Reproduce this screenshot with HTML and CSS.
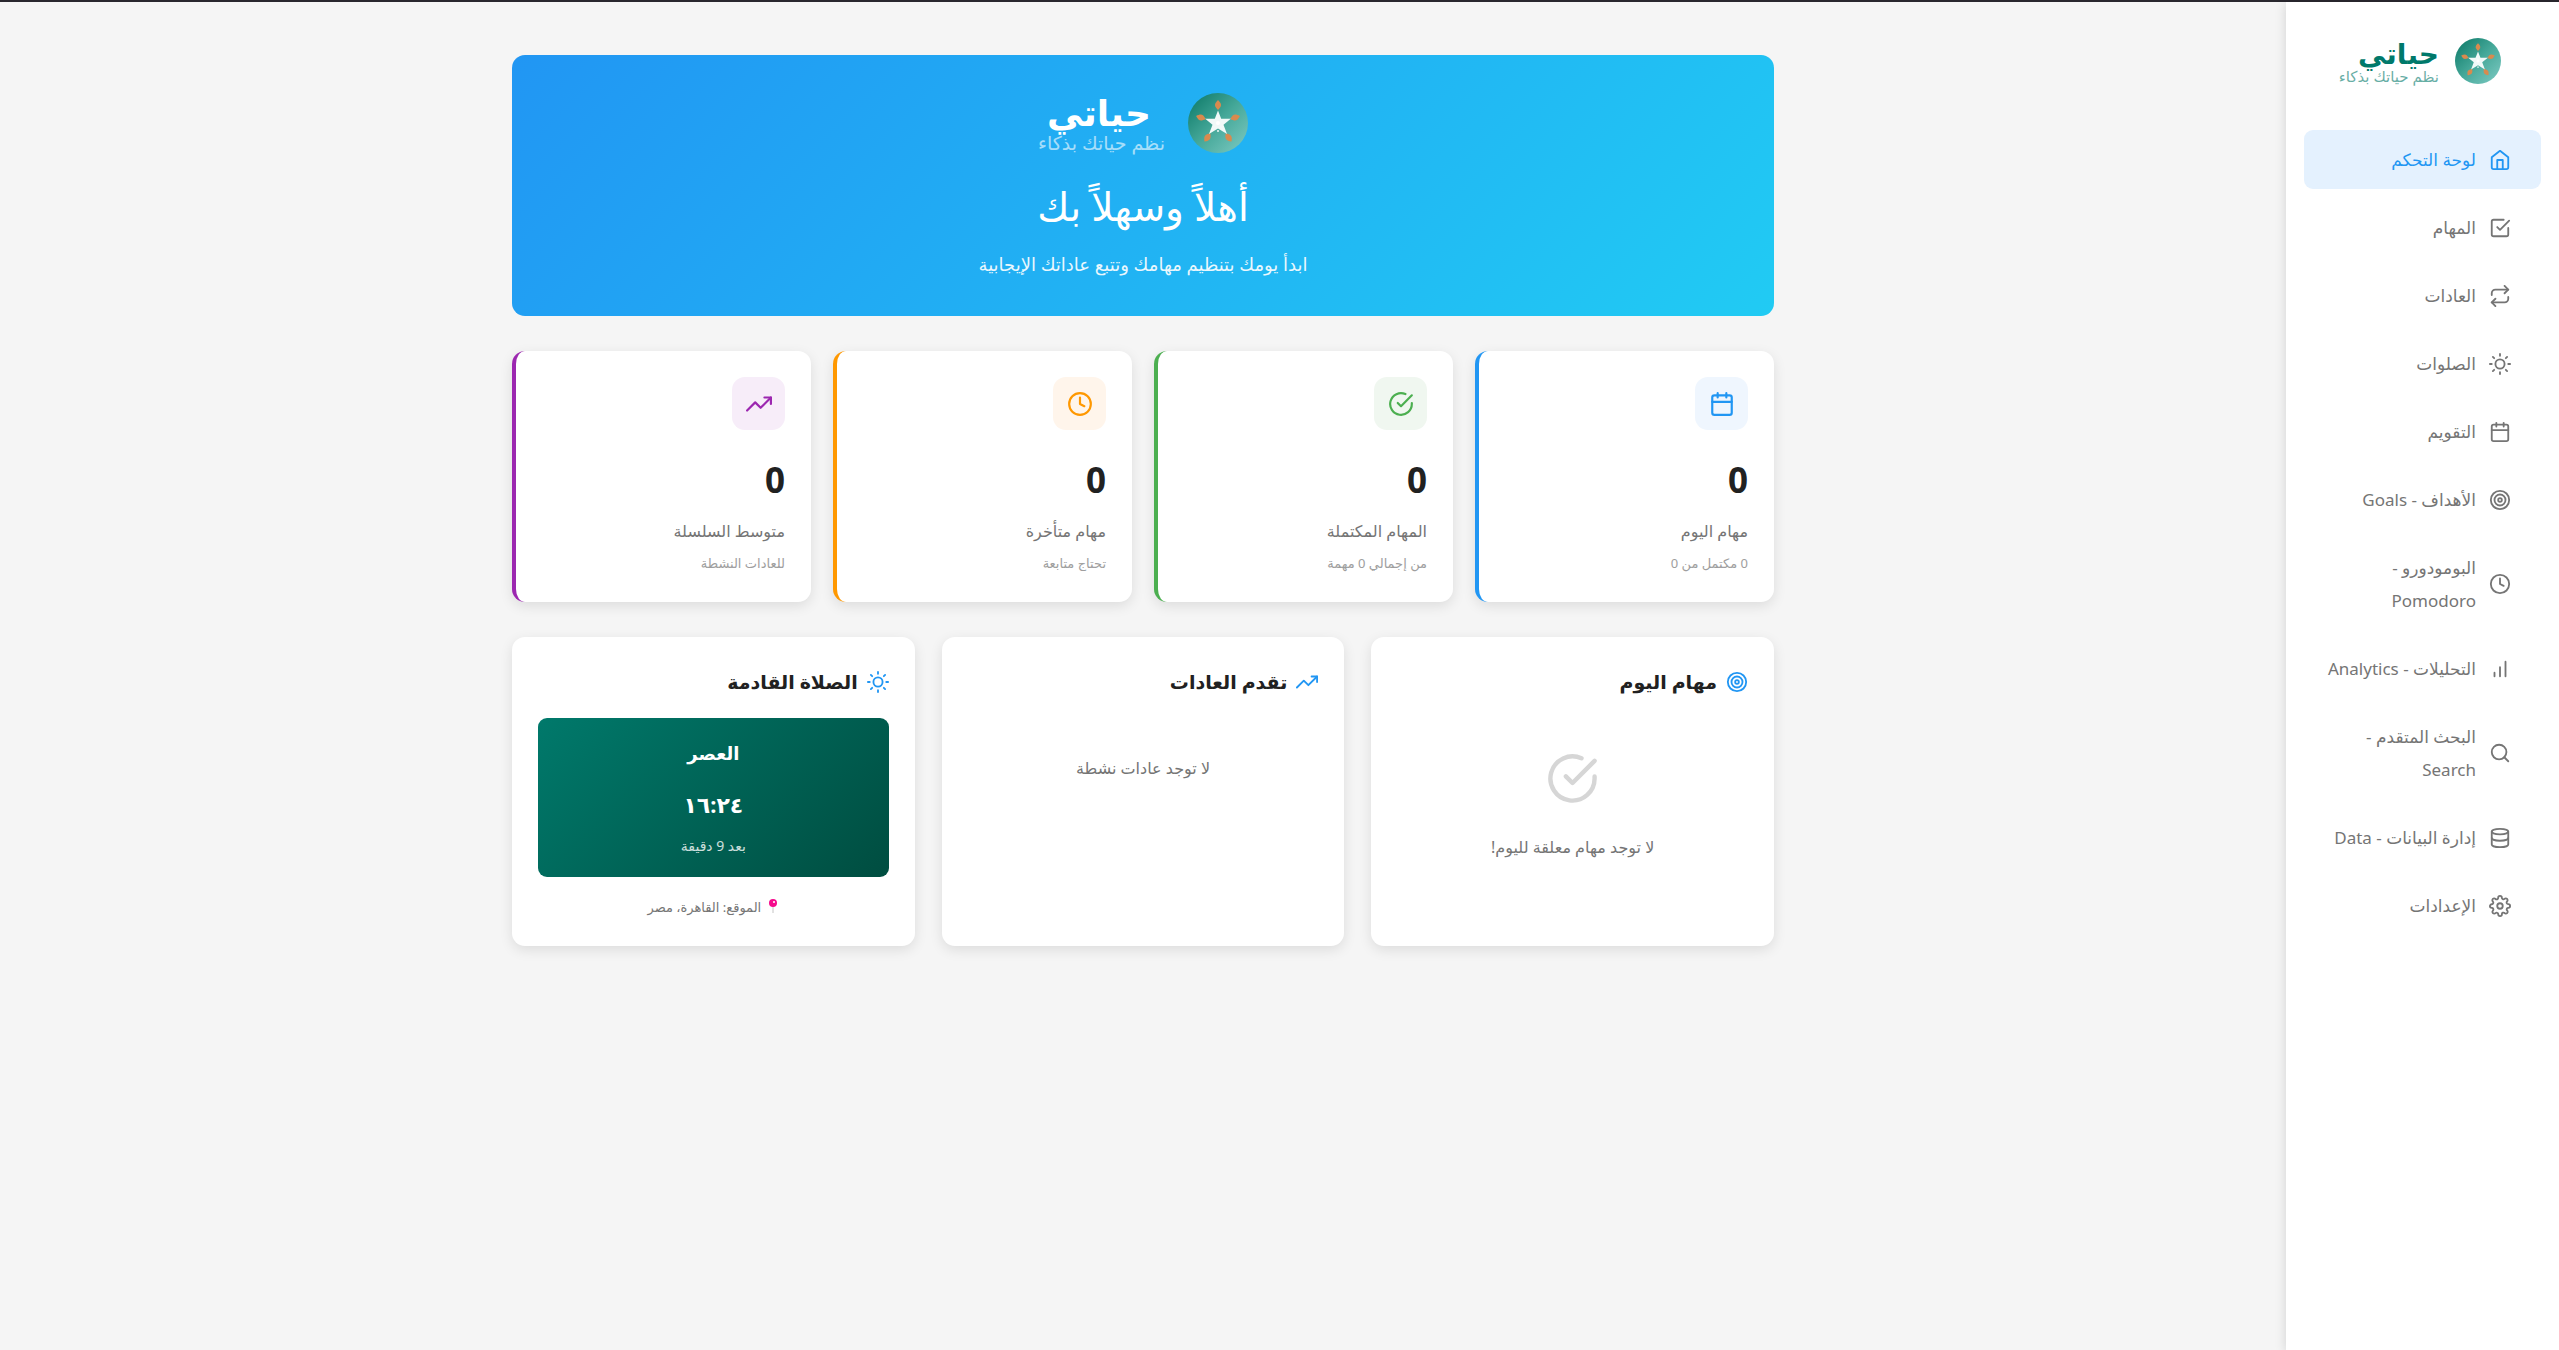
FILE: index.html
```html
<!DOCTYPE html>
<html lang="ar" dir="rtl">
<head>
<meta charset="utf-8">
<meta name="viewport" content="width=device-width, initial-scale=1">
<title>حياتي</title>
<link rel="stylesheet" href="styles.css">
</head>
<body>
<svg class="sprite" aria-hidden="true">
  <defs>
    <linearGradient id="mark-fill" x1="0" y1="0" x2="1" y2="1">
      <stop offset="0.100" stop-color="#15806f"/><stop offset="0.500" stop-color="#45a899"/><stop offset="1" stop-color="#80cbc4"/>
    </linearGradient>
    <symbol id="mark" viewBox="0 0 60 60">
      <circle cx="30" cy="30" r="30" fill="url(#mark-fill)"/>
      <g fill="#d98a4e">
        <path id="leaf" d="M30 7c4 4 4 6 0 10c-4-4-4-6 0-10z"/>
        <use href="#leaf" transform="rotate(72 30 30)"/>
        <use href="#leaf" transform="rotate(144 30 30)"/>
        <use href="#leaf" transform="rotate(216 30 30)"/>
        <use href="#leaf" transform="rotate(288 30 30)"/>
      </g>
      <path fill="#f1f9f8" d="M30 17.500l3.200 8.200h9.600l-7.300 6 3.500 9.300-9-5.500-9 5.500 3.500-9.300-7.300-6h9.600z"/>
      <circle cx="30" cy="30" r="2" fill="#fff"/><circle cx="30" cy="38" r="1" fill="#f1f9f8"/>
    </symbol>
    <symbol id="home" viewBox="0 0 24 24"><path d="M3 9l9-7 9 7v11a2 2 0 0 1-2 2H5a2 2 0 0 1-2-2z"/><path d="M9 22V12h6v10"/></symbol>
    <symbol id="check-square" viewBox="0 0 24 24"><path d="M9 11l3 3L22 4"/><path d="M21 12v7a2 2 0 0 1-2 2H5a2 2 0 0 1-2-2V5a2 2 0 0 1 2-2h11"/></symbol>
    <symbol id="repeat" viewBox="0 0 24 24"><path d="M17 1l4 4-4 4"/><path d="M3 11V9a4 4 0 0 1 4-4h14"/><path d="M7 23l-4-4 4-4"/><path d="M21 13v2a4 4 0 0 1-4 4H3"/></symbol>
    <symbol id="sun" viewBox="0 0 24 24"><circle cx="12" cy="12" r="5"/><path d="M12 1v2M12 21v2M4.220 4.220l1.420 1.420M18.360 18.360l1.420 1.420M1 12h2M21 12h2M4.220 19.780l1.420-1.420M18.360 5.640l1.420-1.420"/></symbol>
    <symbol id="calendar" viewBox="0 0 24 24"><rect x="3" y="4" width="18" height="18" rx="2"/><path d="M16 2v4M8 2v4M3 10h18"/></symbol>
    <symbol id="target" viewBox="0 0 24 24"><circle cx="12" cy="12" r="10"/><circle cx="12" cy="12" r="6"/><circle cx="12" cy="12" r="2"/></symbol>
    <symbol id="clock" viewBox="0 0 24 24"><circle cx="12" cy="12" r="10"/><path d="M12 6v6l4 2"/></symbol>
    <symbol id="bars" viewBox="0 0 24 24"><path d="M18 20V4M12 20V10M6 20v-4"/></symbol>
    <symbol id="search" viewBox="0 0 24 24"><circle cx="11" cy="11" r="8"/><path d="M21 21l-4.350-4.350"/></symbol>
    <symbol id="database" viewBox="0 0 24 24"><ellipse cx="12" cy="5" rx="9" ry="3"/><path d="M21 12c0 1.660-4 3-9 3s-9-1.340-9-3"/><path d="M3 5v14c0 1.660 4 3 9 3s9-1.340 9-3V5"/></symbol>
    <symbol id="settings" viewBox="0 0 24 24"><circle cx="12" cy="12" r="3"/><path d="M19.400 15a1.650 1.650 0 0 0 .33 1.820l.06.06a2 2 0 0 1 0 2.830 2 2 0 0 1-2.830 0l-.06-.06a1.650 1.650 0 0 0-1.820-.33 1.650 1.650 0 0 0-1 1.510V21a2 2 0 0 1-2 2 2 2 0 0 1-2-2v-.09A1.650 1.650 0 0 0 9 19.400a1.650 1.650 0 0 0-1.820.33l-.06.06a2 2 0 0 1-2.830 0 2 2 0 0 1 0-2.830l.06-.06a1.650 1.650 0 0 0 .33-1.820 1.650 1.650 0 0 0-1.510-1H3a2 2 0 0 1-2-2 2 2 0 0 1 2-2h.09A1.650 1.650 0 0 0 4.600 9a1.650 1.650 0 0 0-.33-1.820l-.06-.06a2 2 0 0 1 0-2.830 2 2 0 0 1 2.830 0l.06.06a1.650 1.650 0 0 0 1.820.33H9a1.650 1.650 0 0 0 1-1.510V3a2 2 0 0 1 2-2 2 2 0 0 1 2 2v.09a1.650 1.650 0 0 0 1 1.510 1.650 1.650 0 0 0 1.820-.33l.06-.06a2 2 0 0 1 2.830 0 2 2 0 0 1 0 2.830l-.06.06a1.650 1.650 0 0 0-.33 1.820V9a1.650 1.650 0 0 0 1.510 1H21a2 2 0 0 1 2 2 2 2 0 0 1-2 2h-.09a1.650 1.650 0 0 0-1.510 1z"/></symbol>
    <symbol id="check-circle" viewBox="0 0 24 24"><path d="M22 11.080V12a10 10 0 1 1-5.930-9.140"/><path d="M22 4L12 14.010l-3-3"/></symbol>
    <symbol id="trend" viewBox="0 0 24 24"><path d="M23 6l-9.500 9.500-5-5L1 18"/><path d="M17 6h6v6"/></symbol>
  </defs>
</svg>

<div class="app">
  <aside class="sidebar">
    <div class="brand">
      <svg class="brand-mark"><use href="#mark"/></svg>
      <div class="brand-text">
        <span class="brand-name">حياتي</span>
        <span class="brand-tagline">نظم حياتك بذكاء</span>
      </div>
    </div>
    <nav class="nav">
      <a class="nav-link active" href="#"><svg class="icon"><use href="#home"/></svg><span>لوحة التحكم</span></a>
      <a class="nav-link" href="#"><svg class="icon"><use href="#check-square"/></svg><span>المهام</span></a>
      <a class="nav-link" href="#"><svg class="icon"><use href="#repeat"/></svg><span>العادات</span></a>
      <a class="nav-link" href="#"><svg class="icon"><use href="#sun"/></svg><span>الصلوات</span></a>
      <a class="nav-link" href="#"><svg class="icon"><use href="#calendar"/></svg><span>التقويم</span></a>
      <a class="nav-link" href="#"><svg class="icon"><use href="#target"/></svg><span>الأهداف - Goals</span></a>
      <a class="nav-link" href="#"><svg class="icon"><use href="#clock"/></svg><span>البومودورو -<br>Pomodoro</span></a>
      <a class="nav-link" href="#"><svg class="icon"><use href="#bars"/></svg><span>التحليلات - Analytics</span></a>
      <a class="nav-link" href="#"><svg class="icon"><use href="#search"/></svg><span>البحث المتقدم -<br>Search</span></a>
      <a class="nav-link" href="#"><svg class="icon"><use href="#database"/></svg><span>إدارة البيانات - Data</span></a>
      <a class="nav-link" href="#"><svg class="icon"><use href="#settings"/></svg><span>الإعدادات</span></a>
    </nav>
  </aside>

  <main class="main">
    <div class="content">
      <header class="hero">
        <div class="brand brand-large">
          <svg class="brand-mark"><use href="#mark"/></svg>
          <div class="brand-text">
            <span class="brand-name">حياتي</span>
            <span class="brand-tagline">نظم حياتك بذكاء</span>
          </div>
        </div>
        <h1 class="hero-title">أهلاً وسهلاً بك</h1>
        <p class="hero-text">ابدأ يومك بتنظيم مهامك وتتبع عاداتك الإيجابية</p>
      </header>

      <section class="stats">
        <article class="stat blue">
          <div class="stat-icon"><svg class="icon"><use href="#calendar"/></svg></div>
          <div class="stat-value">0</div>
          <div class="stat-label">مهام اليوم</div>
          <div class="stat-note">0 مكتمل من 0</div>
        </article>
        <article class="stat green">
          <div class="stat-icon"><svg class="icon"><use href="#check-circle"/></svg></div>
          <div class="stat-value">0</div>
          <div class="stat-label">المهام المكتملة</div>
          <div class="stat-note">من إجمالي 0 مهمة</div>
        </article>
        <article class="stat orange">
          <div class="stat-icon"><svg class="icon"><use href="#clock"/></svg></div>
          <div class="stat-value">0</div>
          <div class="stat-label">مهام متأخرة</div>
          <div class="stat-note">تحتاج متابعة</div>
        </article>
        <article class="stat purple">
          <div class="stat-icon"><svg class="icon"><use href="#trend"/></svg></div>
          <div class="stat-value">0</div>
          <div class="stat-label">متوسط السلسلة</div>
          <div class="stat-note">للعادات النشطة</div>
        </article>
      </section>

      <section class="panels">
        <article class="panel">
          <h2 class="panel-title"><svg class="icon"><use href="#target"/></svg>مهام اليوم</h2>
          <div class="empty">
            <svg class="icon empty-icon"><use href="#check-circle"/></svg>
            <p>لا توجد مهام معلقة لليوم!</p>
          </div>
        </article>
        <article class="panel">
          <h2 class="panel-title"><svg class="icon"><use href="#trend"/></svg>تقدم العادات</h2>
          <div class="empty"><p>لا توجد عادات نشطة</p></div>
        </article>
        <article class="panel">
          <h2 class="panel-title"><svg class="icon"><use href="#sun"/></svg>الصلاة القادمة</h2>
          <div class="prayer">
            <div class="prayer-name">العصر</div>
            <div class="prayer-time">١٦:٢٤</div>
            <div class="prayer-left">بعد 9 دقيقة</div>
          </div>
          <p class="location">
            <svg class="pin" viewBox="0 0 12 16"><path d="M6 7v8" stroke="#c4c4c4" stroke-width="1"/><circle cx="6" cy="5" r="4" fill="#f50a8c"/><circle cx="7" cy="4" r="1" fill="#fff"/></svg>
            الموقع: القاهرة، مصر
          </p>
        </article>
      </section>
    </div>
  </main>
</div>
</body>
</html>
```
FILE: styles.css
```css
* {
  box-sizing: border-box;
}

body {
  margin: 0;
  background: #f5f5f5;
  color: #212121;
  font-family: "Noto Sans", "DejaVu Sans", sans-serif;
}

h1,
h2,
p {
  margin: 0;
}

.sprite {
  position: absolute;
  width: 0;
  height: 0;
}

.icon {
  flex: none;
  width: 22px;
  height: 22px;
  fill: none;
  stroke: currentColor;
  stroke-width: 2;
  stroke-linecap: round;
  stroke-linejoin: round;
}

.app {
  display: flex;
  min-height: 100vh;
  border-top: 2px solid #29272e;
}

/* Sidebar */

.sidebar {
  flex: none;
  width: 273px;
  padding: 36px 18px;
  background: #fff;
  box-shadow: 0 2px 11px rgba(0, 0, 0, 0.15);
}

.brand {
  display: flex;
  gap: 16px;
  padding-right: 40px;
  color: #00796b;
}

.brand-mark {
  flex: none;
  width: 46px;
  height: 46px;
}

.brand-text {
  display: flex;
  flex-direction: column;
  white-space: nowrap;
}

.brand-name {
  font-size: 28px;
  font-weight: 700;
  line-height: 30px;
}

.brand-tagline {
  font-size: 15px;
  line-height: 16px;
  opacity: 0.6;
}

.nav {
  display: flex;
  flex-direction: column;
  gap: 9px;
  margin-top: 46px;
}

.nav-link {
  display: flex;
  align-items: center;
  gap: 13px;
  padding: 13px 30px;
  border-radius: 9px;
  color: #757575;
  font-size: 17px;
  line-height: 33px;
  text-decoration: none;
  white-space: nowrap;
}

.nav-link.active {
  background: #e4f1fe;
  color: #2196f3;
}

/* Main column */

.main {
  flex: 1;
  padding: 53px 40px;
}

.content {
  display: flex;
  flex-direction: column;
  gap: 35px;
  max-width: 1262px;
  margin: 0 auto;
}

.hero {
  display: flex;
  flex-direction: column;
  align-items: center;
  padding: 38px 26px 36px;
  border-radius: 13px;
  background: linear-gradient(135deg, #2196f3, #21cbf3);
  color: #fff;
}

.brand-large {
  gap: 23px;
  padding: 0;
  color: #fff;
}

.brand-large .brand-mark {
  width: 60px;
  height: 60px;
}

.brand-large .brand-name {
  padding-right: 14px;
  font-size: 36px;
  line-height: 40px;
}

.brand-large .brand-tagline {
  font-size: 19px;
  line-height: 20px;
}

.hero-title {
  margin-top: 24px;
  font-size: 39px;
  font-weight: 400;
  line-height: 58px;
}

.hero-text {
  margin-top: 13px;
  font-size: 18px;
  line-height: 32px;
  opacity: 0.9;
}

/* Stat cards */

.stats {
  display: grid;
  grid-template-columns: repeat(4, 1fr);
  gap: 22px;
}

.stat {
  padding: 26px;
  border-left: 4px solid currentColor;
  border-radius: 13px;
  background: #fff;
  box-shadow: 0 4px 13px rgba(0, 0, 0, 0.1);
}

.stat-icon {
  display: flex;
  align-items: center;
  justify-content: center;
  width: 53px;
  height: 53px;
  border-radius: 13px;
}

.stat-icon .icon {
  width: 26px;
  height: 26px;
}

.blue { color: #2196f3; }
.blue .stat-icon { background: #eff6fe; }
.green { color: #4caf50; }
.green .stat-icon { background: #f0f7f0; }
.orange { color: #ff9800; }
.orange .stat-icon { background: #fff5eb; }
.purple { color: #9c27b0; }
.purple .stat-icon { background: #f7edf9; }

.stat-value {
  margin-top: 22px;
  color: #212121;
  font-size: 35px;
  font-weight: 700;
  line-height: 56px;
}

.stat-label {
  margin-top: 9px;
  color: #757575;
  font-size: 16px;
  line-height: 28px;
}

.stat-note {
  margin-top: 5px;
  color: #9e9e9e;
  font-size: 13px;
  line-height: 26px;
}

/* Bottom panels */

.panels {
  display: grid;
  grid-template-columns: repeat(3, 1fr);
  gap: 27px;
}

.panel {
  padding: 26px;
  border-radius: 13px;
  background: #fff;
  box-shadow: 0 4px 13px rgba(0, 0, 0, 0.1);
}

.panel-title {
  display: flex;
  align-items: center;
  gap: 9px;
  font-size: 19px;
  font-weight: 700;
  line-height: 38px;
}

.panel-title .icon {
  color: #2196f3;
}

.empty {
  display: flex;
  flex-direction: column;
  align-items: center;
  gap: 26px;
  padding-top: 51px;
  color: #757575;
  font-size: 16px;
  line-height: 32px;
}

.empty-icon {
  width: 53px;
  height: 53px;
  color: #d6d6d6;
}

.prayer {
  margin-top: 17px;
  padding: 18px;
  border-radius: 9px;
  background: linear-gradient(135deg, #00796b, #004d40);
  color: #fff;
  text-align: center;
}

.prayer-name {
  font-size: 18px;
  font-weight: 700;
  line-height: 34px;
}

.prayer-time {
  margin-top: 12px;
  font-size: 22px;
  font-weight: 700;
  line-height: 44px;
}

.prayer-left {
  margin-top: 6px;
  font-size: 14px;
  line-height: 27px;
  opacity: 0.8;
}

.location {
  display: flex;
  justify-content: center;
  gap: 6px;
  margin-top: 17px;
  color: #757575;
  font-size: 13px;
  line-height: 26px;
}

.pin {
  width: 12px;
  height: 16px;
  margin-top: 4px;
}
```
